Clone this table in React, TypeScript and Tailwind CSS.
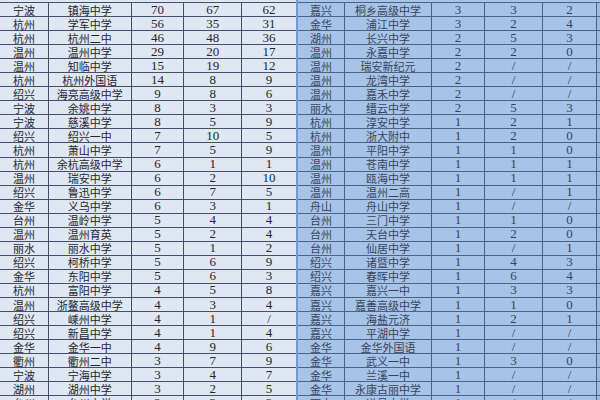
import React from "react";

type Row = [string, string, string, string, string];

const left: Row[] = [
  ["宁波", "镇海中学", "70", "67", "62"],
  ["杭州", "学军中学", "56", "35", "31"],
  ["杭州", "杭州二中", "46", "48", "36"],
  ["温州", "温州中学", "29", "20", "17"],
  ["温州", "知临中学", "15", "19", "12"],
  ["杭州", "杭州外国语", "14", "8", "9"],
  ["绍兴", "海亮高级中学", "9", "8", "6"],
  ["宁波", "余姚中学", "8", "3", "3"],
  ["宁波", "慈溪中学", "8", "5", "9"],
  ["绍兴", "绍兴一中", "7", "10", "5"],
  ["杭州", "萧山中学", "7", "5", "9"],
  ["杭州", "余杭高级中学", "6", "1", "1"],
  ["温州", "瑞安中学", "6", "2", "10"],
  ["绍兴", "鲁迅中学", "6", "7", "5"],
  ["金华", "义乌中学", "6", "3", "1"],
  ["台州", "温岭中学", "5", "4", "4"],
  ["温州", "温州育英", "5", "2", "4"],
  ["丽水", "丽水中学", "5", "1", "2"],
  ["绍兴", "柯桥中学", "5", "6", "9"],
  ["金华", "东阳中学", "5", "6", "3"],
  ["杭州", "富阳中学", "4", "5", "8"],
  ["温州", "浙鳌高级中学", "4", "3", "4"],
  ["绍兴", "嵊州中学", "4", "1", "/"],
  ["绍兴", "新昌中学", "4", "1", "4"],
  ["金华", "金华一中", "4", "9", "6"],
  ["衢州", "衢州二中", "3", "7", "9"],
  ["宁波", "宁海中学", "3", "4", "7"],
  ["湖州", "湖州中学", "3", "2", "5"],
  ["台州", "台州中学", "3", "3", "3"],
];

const right: Row[] = [
  ["嘉兴", "桐乡高级中学", "3", "3", "2"],
  ["金华", "浦江中学", "3", "2", "4"],
  ["湖州", "长兴中学", "2", "5", "3"],
  ["温州", "永嘉中学", "2", "2", "0"],
  ["温州", "瑞安新纪元", "2", "/", "/"],
  ["温州", "龙湾中学", "2", "/", "/"],
  ["温州", "嘉禾中学", "2", "/", "/"],
  ["丽水", "缙云中学", "2", "5", "3"],
  ["杭州", "淳安中学", "1", "2", "1"],
  ["杭州", "浙大附中", "1", "2", "0"],
  ["温州", "平阳中学", "1", "1", "0"],
  ["温州", "苍南中学", "1", "1", "1"],
  ["温州", "瓯海中学", "1", "1", "1"],
  ["温州", "温州二高", "1", "/", "1"],
  ["舟山", "舟山中学", "1", "/", "/"],
  ["台州", "三门中学", "1", "1", "0"],
  ["台州", "天台中学", "1", "2", "0"],
  ["台州", "仙居中学", "1", "/", "1"],
  ["绍兴", "诸暨中学", "1", "4", "3"],
  ["绍兴", "春晖中学", "1", "6", "4"],
  ["嘉兴", "嘉兴一中", "1", "3", "3"],
  ["嘉兴", "嘉善高级中学", "1", "1", "0"],
  ["嘉兴", "海盐元济", "1", "2", "1"],
  ["嘉兴", "平湖中学", "1", "/", "/"],
  ["金华", "金华外国语", "1", "/", "/"],
  ["金华", "武义一中", "1", "3", "0"],
  ["金华", "兰溪一中", "1", "/", "/"],
  ["金华", "永康古丽中学", "1", "/", "/"],
  ["丽水", "遂昌中学", "1", "/", "/"],
];

const cjk = "font-['Noto_Sans_CJK_SC','Noto_Sans',sans-serif] text-[11px] leading-[12px]";
const num = "font-['Liberation_Serif','Noto_Sans_CJK_SC',serif] text-[13px] leading-[12px]";

function LeftRow({ r }: { r: Row }) {
  const cell = "flex items-center justify-center border-r border-[#44506a] h-full";
  return (
    <div className="flex shrink-0 h-[14.06px] border-b border-[#44506a] text-[#25262e]">
      <div className={`${cell} w-[49px] ${cjk}`}>{r[0]}</div>
      <div className={`${cell} w-[83px] ${cjk}`}>{r[1]}</div>
      <div className={`${cell} w-[53px] ${num}`}>{r[2]}</div>
      <div className={`${cell} w-[58px] ${num}`}>{r[3]}</div>
      <div className={`flex items-center justify-center h-full w-[54px] ${num}`}>{r[4]}</div>
    </div>
  );
}

function RightRow({ r }: { r: Row }) {
  const cell = "flex items-center justify-center border-r border-[#4d6386] h-full";
  return (
    <div className="flex shrink-0 h-[14.06px] border-b border-[#4d6386] text-[#3a4358]">
      <div className={`${cell} w-[47px] ${cjk}`}>{r[0]}</div>
      <div className={`${cell} w-[87px] ${cjk}`}>{r[1]}</div>
      <div className={`${cell} w-[53px] ${num}`}>{r[2]}</div>
      <div className={`${cell} w-[58px] ${num}`}>{r[3]}</div>
      <div className={`${cell} w-[54px] ${num}`}>{r[4]}</div>
      <div className="w-[3px] h-full bg-[#9dbbe3]" />
    </div>
  );
}

export default function App() {
  return (
    <div className="w-[600px] h-[400px] overflow-hidden flex bg-[#a6c3e8]">
      <div className="w-[298px] shrink-0 bg-[#dfe7f3] border-r-2 border-[#6f98d6] flex flex-col">
        <div className="h-[3px] shrink-0 border-b border-[#44506a]" />
        {left.map((r, i) => (
          <LeftRow key={i} r={r} />
        ))}
      </div>
      <div className="w-[302px] shrink-0 bg-[#a6c3e8] flex flex-col">
        <div className="h-[3px] shrink-0 border-b border-[#4d6386]" />
        {right.map((r, i) => (
          <RightRow key={i} r={r} />
        ))}
      </div>
    </div>
  );
}
